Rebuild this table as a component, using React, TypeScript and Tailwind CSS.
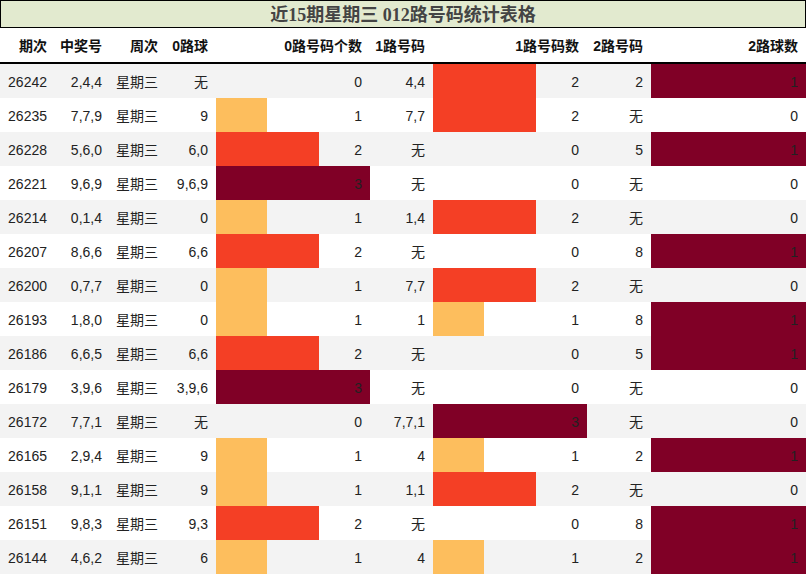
import React from "react";

type Row = {
  issue: string;
  nums: string;
  week: string;
  r0: string;
  c0: number;
  r1: string;
  c1: number;
  r2: string;
  c2: number;
};

const rows: Row[] = [
  { issue: "26242", nums: "2,4,4", week: "星期三", r0: "无", c0: 0, r1: "4,4", c1: 2, r2: "2", c2: 1 },
  { issue: "26235", nums: "7,7,9", week: "星期三", r0: "9", c0: 1, r1: "7,7", c1: 2, r2: "无", c2: 0 },
  { issue: "26228", nums: "5,6,0", week: "星期三", r0: "6,0", c0: 2, r1: "无", c1: 0, r2: "5", c2: 1 },
  { issue: "26221", nums: "9,6,9", week: "星期三", r0: "9,6,9", c0: 3, r1: "无", c1: 0, r2: "无", c2: 0 },
  { issue: "26214", nums: "0,1,4", week: "星期三", r0: "0", c0: 1, r1: "1,4", c1: 2, r2: "无", c2: 0 },
  { issue: "26207", nums: "8,6,6", week: "星期三", r0: "6,6", c0: 2, r1: "无", c1: 0, r2: "8", c2: 1 },
  { issue: "26200", nums: "0,7,7", week: "星期三", r0: "0", c0: 1, r1: "7,7", c1: 2, r2: "无", c2: 0 },
  { issue: "26193", nums: "1,8,0", week: "星期三", r0: "0", c0: 1, r1: "1", c1: 1, r2: "8", c2: 1 },
  { issue: "26186", nums: "6,6,5", week: "星期三", r0: "6,6", c0: 2, r1: "无", c1: 0, r2: "5", c2: 1 },
  { issue: "26179", nums: "3,9,6", week: "星期三", r0: "3,9,6", c0: 3, r1: "无", c1: 0, r2: "无", c2: 0 },
  { issue: "26172", nums: "7,7,1", week: "星期三", r0: "无", c0: 0, r1: "7,7,1", c1: 3, r2: "无", c2: 0 },
  { issue: "26165", nums: "2,9,4", week: "星期三", r0: "9", c0: 1, r1: "4", c1: 1, r2: "2", c2: 1 },
  { issue: "26158", nums: "9,1,1", week: "星期三", r0: "9", c0: 1, r1: "1,1", c1: 2, r2: "无", c2: 0 },
  { issue: "26151", nums: "9,8,3", week: "星期三", r0: "9,3", c0: 2, r1: "无", c1: 0, r2: "8", c2: 1 },
  { issue: "26144", nums: "4,6,2", week: "星期三", r0: "6", c0: 1, r1: "4", c1: 1, r2: "2", c2: 1 },
];

const cols = "grid grid-cols-[55px_55px_56px_50px_154px_63px_154px_64px_1fr]";

function barColor(frac: number) {
  if (frac >= 1) return "#800026";
  if (frac >= 0.6) return "#f43f25";
  return "#fdbe5d";
}

function BarCell({ value, max }: { value: number; max: number }) {
  const frac = value / max;
  return (
    <div className="relative flex items-center justify-end pr-2 pt-[2px]">
      {value > 0 && (
        <div
          className="absolute left-0 top-0 h-full"
          style={{ width: `${frac * 100}%`, backgroundColor: barColor(frac) }}
        />
      )}
      <span className="relative">{value}</span>
    </div>
  );
}

function Cell({ children }: { children: React.ReactNode }) {
  return <div className="flex items-center justify-end pr-2 pt-[2px]">{children}</div>;
}

export default function App() {
  return (
    <div className="w-[806px] h-[575px] overflow-hidden bg-white font-['Liberation_Sans','Noto_Sans_CJK_SC',sans-serif] text-[14px] text-[#222]">
      <div className="h-[28px] border border-black bg-[#e2eacf] flex items-center justify-center pt-[2px]">
        <span className="font-['Liberation_Serif','Noto_Sans_CJK_SC',serif] font-bold text-[18px] text-[#444]">
          近15期星期三 012路号码统计表格
        </span>
      </div>
      <div className={`${cols} h-[36px] border-b-2 border-black font-bold text-[#111]`}>
        <Cell>期次</Cell>
        <Cell>中奖号</Cell>
        <Cell>周次</Cell>
        <Cell>0路球</Cell>
        <Cell>0路号码个数</Cell>
        <Cell>1路号码</Cell>
        <Cell>1路号码数</Cell>
        <Cell>2路号码</Cell>
        <Cell>2路球数</Cell>
      </div>
      {rows.map((r, i) => (
        <div key={r.issue} className={`${cols} h-[34px] ${i % 2 === 0 ? "bg-[#f3f3f3]" : "bg-white"}`}>
          <Cell>{r.issue}</Cell>
          <Cell>{r.nums}</Cell>
          <Cell>{r.week}</Cell>
          <Cell>{r.r0}</Cell>
          <BarCell value={r.c0} max={3} />
          <Cell>{r.r1}</Cell>
          <BarCell value={r.c1} max={3} />
          <Cell>{r.r2}</Cell>
          <BarCell value={r.c2} max={1} />
        </div>
      ))}
    </div>
  );
}
